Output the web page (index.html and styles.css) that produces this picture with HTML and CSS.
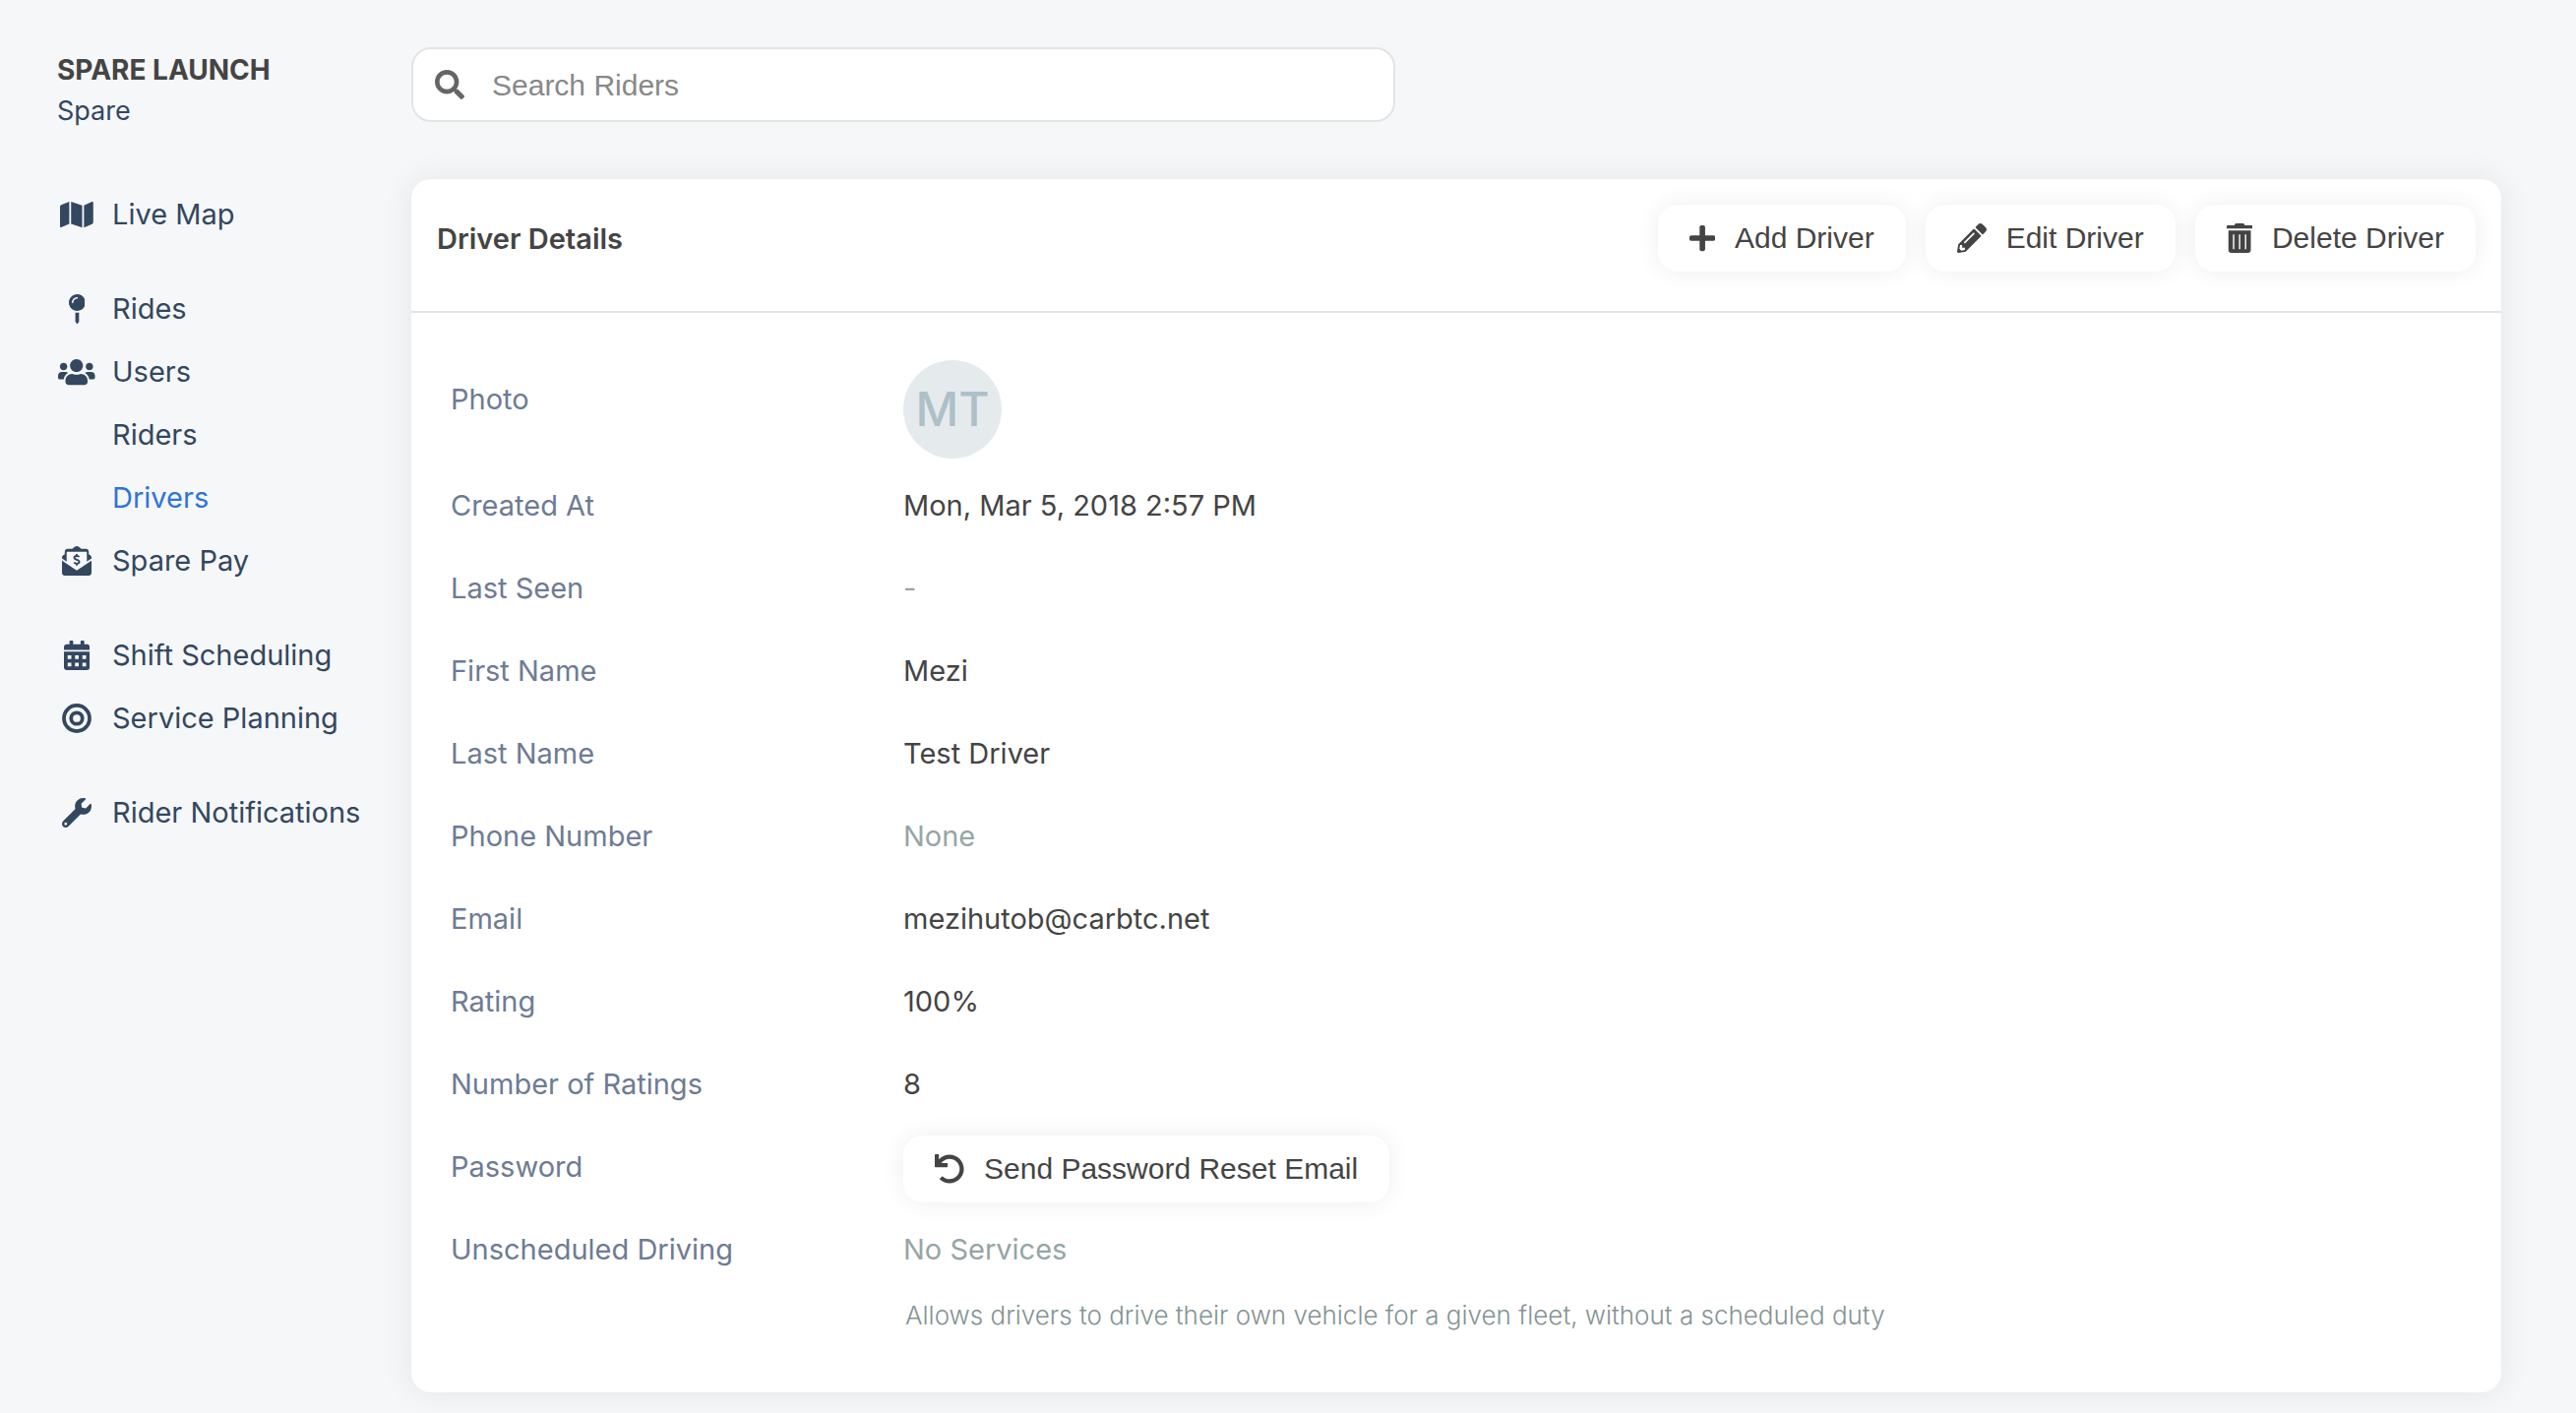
FILE: index.html
```html
<!DOCTYPE html>
<html lang="en">
<head>
<meta charset="utf-8">
<title>Driver Details - Spare Launch</title>
<link rel="stylesheet" href="styles.css">
</head>
<body>
<div class="layout">
  <aside class="sidebar">
    <div class="brand">SPARE LAUNCH</div>
    <div class="org">Spare</div>
    <nav class="nav">
      <ul class="nav-group">
        <li><a class="nav-link" href="#"><span class="nav-icon"><svg class="icon" viewBox="0 0 576 512"><path d="M0 117.66v346.32c0 11.32 11.43 19.06 21.94 14.86L160 416V32L20.12 87.95A32.006 32.006 0 0 0 0 117.66zM192 416l192 64V96L192 32v384zM554.06 33.16L416 96v384l139.88-55.95A31.996 31.996 0 0 0 576 394.34V48.02c0-11.32-11.43-19.06-21.94-14.86z"/></svg></span>Live Map</a></li>
      </ul>
      <ul class="nav-group">
        <li><a class="nav-link" href="#"><span class="nav-icon"><svg class="icon" viewBox="0 0 288 512"><path d="M112 316.94v156.69l22.02 33.02c4.75 7.12 15.22 7.12 19.97 0L176 473.63V316.94c-10.39 1.92-21.06 3.06-32 3.06s-21.61-1.14-32-3.06zM144 0C64.47 0 0 64.47 0 144s64.47 144 144 144 144-64.47 144-144S223.53 0 144 0zm0 76c-37.5 0-68 30.5-68 68 0 6.62-5.38 12-12 12s-12-5.38-12-12c0-50.73 41.28-92 92-92 6.62 0 12 5.38 12 12s-5.38 12-12 12z"/></svg></span>Rides</a></li>
        <li><a class="nav-link" href="#"><span class="nav-icon"><svg class="icon" viewBox="0 0 640 512"><path d="M96 224c35.3 0 64-28.7 64-64s-28.7-64-64-64-64 28.7-64 64 28.7 64 64 64zm448 0c35.3 0 64-28.7 64-64s-28.7-64-64-64-64 28.7-64 64 28.7 64 64 64zm32 32h-64c-17.6 0-33.5 7.1-45.1 18.6 40.3 22.1 68.9 62 75.1 109.4h66c17.7 0 32-14.3 32-32v-32c0-35.3-28.7-64-64-64zm-256 0c61.9 0 112-50.1 112-112S381.9 32 320 32 208 82.1 208 144s50.1 112 112 112zm76.8 32h-8.3c-20.8 10-43.9 16-68.5 16s-47.6-6-68.5-16h-8.3C179.6 288 128 339.6 128 403.2V432c0 26.5 21.5 48 48 48h288c26.5 0 48-21.5 48-48v-28.8c0-63.6-51.6-115.2-115.2-115.2zm-223.7-13.4C161.5 263.1 145.6 256 128 256H64c-35.3 0-64 28.7-64 64v32c0 17.7 14.3 32 32 32h65.9c6.3-47.4 34.9-87.3 75.2-109.4z"/></svg></span>Users</a>
          <ul class="nav-sub">
            <li><a class="nav-link" href="#">Riders</a></li>
            <li><a class="nav-link active" href="#" aria-current="page">Drivers</a></li>
          </ul>
        </li>
        <li><a class="nav-link" href="#"><span class="nav-icon"><svg class="icon" viewBox="0 0 512 512"><path fill-rule="evenodd" d="M0 250l256 174 256-174v214c0 26-22 48-48 48H48c-26 0-48-22-48-48zM0 196c0-14 8-24 17-32l31-24V96c0-26 22-48 48-48h82l20-18c16-14 38-30 58-30s42 16 58 30l20 18h82c26 0 48 22 48 48v44l31 24c9 8 17 18 17 32v17l-81 55V96H81v172L0 213z"/><path class="stroke" stroke-width="32" d="M298 190c-8-14-24-20-42-20-24 0-42 12-42 32 0 44 86 24 86 68 0 20-18 34-44 34-22 0-38-8-46-24M256 136v34m0 134v34"/></svg></span>Spare Pay</a></li>
      </ul>
      <ul class="nav-group">
        <li><a class="nav-link" href="#"><span class="nav-icon"><svg class="icon" viewBox="0 0 448 512"><path fill-rule="evenodd" d="M0 160v-48c0-26.500 21.500-48 48-48h48V12c0-6.600 5.400-12 12-12h40c6.600 0 12 5.400 12 12v52h128V12c0-6.600 5.400-12 12-12h40c6.600 0 12 5.400 12 12v52h48c26.500 0 48 21.500 48 48v48zM0 192h448v272c0 26.500-21.500 48-48 48H48c-26.500 0-48-21.500-48-48zM64 256v64h64v-64zM192 256v64h64v-64zM320 256v64h64v-64zM64 384v64h64v-64zM192 384v64h64v-64zM320 384v64h64v-64z"/></svg></span>Shift Scheduling</a></li>
        <li><a class="nav-link" href="#"><span class="nav-icon"><svg class="icon" viewBox="0 0 512 512"><circle class="stroke" cx="256" cy="256" r="222" stroke-width="64"/><circle class="stroke" cx="256" cy="256" r="98" stroke-width="64"/></svg></span>Service Planning</a></li>
      </ul>
      <ul class="nav-group">
        <li><a class="nav-link" href="#"><span class="nav-icon"><svg class="icon" viewBox="0 0 512 512"><path d="M507.73 109.1c-2.24-9.03-13.54-12.09-20.12-5.51l-74.36 74.36-67.88-11.31-11.31-67.88 74.36-74.36c6.62-6.62 3.43-17.9-5.66-20.16-47.38-11.74-99.55.91-136.58 37.93-39.64 39.64-50.55 97.1-34.05 147.2L18.74 402.76c-24.99 24.99-24.99 65.51 0 90.5 24.99 24.99 65.51 24.99 90.5 0l213.21-213.21c50.12 16.71 107.47 5.68 147.37-34.22 37.07-37.07 49.7-89.32 37.91-136.73zM64 472c-13.25 0-24-10.75-24-24 0-13.26 10.75-24 24-24s24 10.74 24 24c0 13.25-10.75 24-24 24z"/></svg></span>Rider Notifications</a></li>
      </ul>
    </nav>
  </aside>

  <main class="main">
    <label class="search">
      <svg class="icon" viewBox="0 0 512 512"><path d="M505 442.7L405.3 343c-4.5-4.5-10.6-7-17-7H372c27.6-35.3 44-79.7 44-128C416 93.1 322.9 0 208 0S0 93.1 0 208s93.1 208 208 208c48.3 0 92.7-16.4 128-44v16.3c0 6.4 2.5 12.500 7 17l99.7 99.7c9.4 9.4 24.6 9.4 33.9 0l28.3-28.3c9.4-9.4 9.4-24.6.1-34zM208 336c-70.7 0-128-57.2-128-128 0-70.7 57.2-128 128-128 70.7 0 128 57.2 128 128 0 70.7-57.2 128-128 128z"/></svg>
      <input class="search-input" type="search" placeholder="Search Riders" aria-label="Search Riders">
    </label>

    <section class="card">
      <header class="card-header">
        <h1 class="card-title">Driver Details</h1>
        <div class="actions">
          <button class="button" type="button"><svg class="icon" viewBox="0 0 448 512"><path d="M416 208H272V64c0-17.670-14.330-32-32-32h-32c-17.670 0-32 14.330-32 32v144H32c-17.670 0-32 14.330-32 32v32c0 17.670 14.330 32 32 32h144v144c0 17.670 14.330 32 32 32h32c17.670 0 32-14.330 32-32V304h144c17.670 0 32-14.330 32-32v-32c0-17.670-14.330-32-32-32z"/></svg>Add Driver</button>
          <button class="button" type="button"><svg class="icon" viewBox="0 0 512 512"><path d="M497.9 142.1l-46.1 46.1c-4.7 4.7-12.3 4.7-17 0l-111-111c-4.7-4.7-4.7-12.3 0-17l46.1-46.1c18.7-18.7 49.1-18.7 67.9 0l60.1 60.1c18.8 18.7 18.8 49.1 0 67.9zM284.2 99.8L21.6 362.4.4 483.9c-2.9 16.4 11.4 30.6 27.8 27.8l121.5-21.3 262.6-262.6c4.7-4.7 4.7-12.3 0-17l-111-111c-4.8-4.7-12.4-4.7-17.1 0zM124.1 339.9c-5.5-5.5-5.5-14.3 0-19.8l154-154c5.5-5.5 14.3-5.5 19.8 0s5.5 14.3 0 19.8l-154 154c-5.5 5.5-14.3 5.5-19.8 0zM88 424h48v36.3l-64.5 11.3-31.1-31.1L51.7 376H88v48z"/></svg>Edit Driver</button>
          <button class="button" type="button"><svg class="icon" viewBox="0 0 448 512"><path fill-rule="evenodd" d="M0 88V46c0-6 5-12 12-12h120l12-20c5-9 12-14 22-14h116c10 0 17 5 22 14l12 20h120c7 0 12 6 12 12v42zM30 122h388v342c0 26-22 48-48 48H78c-26 0-48-22-48-48zM108 190v258h24V190zM212 190v258h24V190zM316 190v258h24V190z"/></svg>Delete Driver</button>
        </div>
      </header>

      <dl class="details">
        <div class="row"><dt>Photo</dt><dd class="photo"><span class="avatar">MT</span></dd></div>
        <div class="row"><dt>Created At</dt><dd>Mon, Mar 5, 2018 2:57 PM</dd></div>
        <div class="row"><dt>Last Seen</dt><dd class="muted">-</dd></div>
        <div class="row"><dt>First Name</dt><dd>Mezi</dd></div>
        <div class="row"><dt>Last Name</dt><dd>Test Driver</dd></div>
        <div class="row"><dt>Phone Number</dt><dd class="muted">None</dd></div>
        <div class="row"><dt>Email</dt><dd>mezihutob@carbtc.net</dd></div>
        <div class="row"><dt>Rating</dt><dd>100%</dd></div>
        <div class="row"><dt>Number of Ratings</dt><dd>8</dd></div>
        <div class="row"><dt>Password</dt><dd class="control"><button class="button" type="button"><svg class="icon" viewBox="0 0 512 512"><path d="M212.333 224.333H12c-6.627 0-12-5.373-12-12V12C0 5.373 5.373 0 12 0h48c6.627 0 12 5.373 12 12v78.112C117.773 39.279 184.26 7.47 258.175 8.007c136.906.994 246.448 111.623 246.157 248.532C504.041 393.258 393.12 504 256.333 504c-64.089 0-122.496-24.313-166.51-64.215-5.099-4.622-5.334-12.554-.467-17.42l33.967-33.967c4.474-4.474 11.662-4.717 16.401-.525C170.76 415.336 211.58 432 256.333 432c97.268 0 176-78.716 176-176 0-97.267-78.716-176-176-176-58.496 0-110.28 28.476-142.274 72.333h98.274c6.627 0 12 5.373 12 12v48c0 6.627-5.373 12-12 12z"/></svg>Send Password Reset Email</button></dd></div>
        <div class="row"><dt>Unscheduled Driving</dt><dd class="muted">No Services<p class="help">Allows drivers to drive their own vehicle for a given fleet, without a scheduled duty</p></dd></div>
      </dl>
    </section>
  </main>
</div>
</body>
</html>
```
FILE: styles.css
```css
* {
  box-sizing: border-box;
}

body {
  margin: 0;
  background: #f6f7f9;
  color: #444;
  font-family: Inter, "Liberation Sans", sans-serif;
  font-size: 29px;
  line-height: 36px;
}

ul,
dl,
dd,
h1,
p {
  margin: 0;
  padding: 0;
}

ul {
  list-style: none;
}

.layout {
  display: flex;
  min-height: 100vh;
}

/* Sidebar */

.sidebar {
  flex: 0 0 418px;
  padding: 50px 0 48px 58px;
  color: #33475f;
}

.brand {
  color: #444;
  font-size: 28px;
  font-weight: 700;
  line-height: 42px;
}

.org {
  font-size: 27px;
  line-height: 42px;
}

.nav {
  display: flex;
  flex-direction: column;
  gap: 32px;
  margin-top: 52px;
}

.nav-link {
  display: flex;
  align-items: center;
  gap: 16px;
  height: 64px;
  color: inherit;
  text-decoration: none;
  white-space: nowrap;
}

.nav-link.active {
  color: #2f75d6;
}

.nav-icon {
  display: flex;
  justify-content: center;
  width: 40px;
}

.nav-sub {
  padding-left: 56px;
}

.icon {
  display: block;
  flex: none;
  height: 30px;
  fill: currentColor;
}

.icon .stroke {
  fill: none;
  stroke: currentColor;
}

/* Main column */

.main {
  flex: 1;
  min-width: 0;
  padding: 48px 76px 22px 0;
}

.search {
  display: flex;
  align-items: center;
  gap: 28px;
  max-width: 1000px;
  height: 76px;
  padding: 0 22px;
  border: 2px solid #e3e4e4;
  border-radius: 20px;
  background: #fff;
  color: #666;
}

.search-input {
  flex: 1;
  min-width: 0;
  padding: 2px 0 0;
  border: 0;
  outline: 0;
  background: none;
  color: #444;
  font-family: "Liberation Sans", Arial, sans-serif;
  font-size: 30px;
}

.search-input::placeholder {
  color: #888;
}

.card {
  margin-top: 58px;
  border-radius: 20px;
  background: #fff;
  box-shadow: 0 0 32px rgba(0, 0, 0, 0.08);
}

.card-header {
  display: flex;
  align-items: center;
  justify-content: space-between;
  padding: 26px 26px 40px;
  border-bottom: 2px solid #e3e4e4;
}

.card-title {
  padding-top: 2px;
  font-size: 29px;
  font-weight: 600;
}

.actions {
  display: flex;
  gap: 20px;
}

.button {
  display: flex;
  align-items: center;
  gap: 20px;
  height: 68px;
  padding: 0 32px;
  border: 0;
  border-radius: 20px;
  background: #fff;
  box-shadow: 0 0 24px rgba(0, 0, 0, 0.07);
  color: #444;
  font-family: "Liberation Sans", Arial, sans-serif;
  font-size: 30px;
  white-space: nowrap;
  cursor: pointer;
}

/* Details list */

.details {
  padding: 46px 40px 37px;
}

.row {
  display: grid;
  grid-template-columns: 460px 1fr;
}

.row dt,
.row dd {
  padding: 24px 0;
}

.row dt {
  color: #6e7b95;
}

.row .photo {
  padding: 2px 0 6px;
}

.row .control {
  padding: 10px 0 6px;
}

.row .muted {
  color: #97a5a6;
}

.avatar {
  display: flex;
  align-items: center;
  justify-content: center;
  width: 100px;
  height: 100px;
  border-radius: 50%;
  background: #e5ebed;
  color: #adc0c8;
  font-size: 48px;
  font-weight: 500;
}

.help {
  margin-top: 32px;
  padding-left: 2px;
  color: #849394;
  font-size: 26px;
  font-weight: 300;
  line-height: 34px;
}
```
